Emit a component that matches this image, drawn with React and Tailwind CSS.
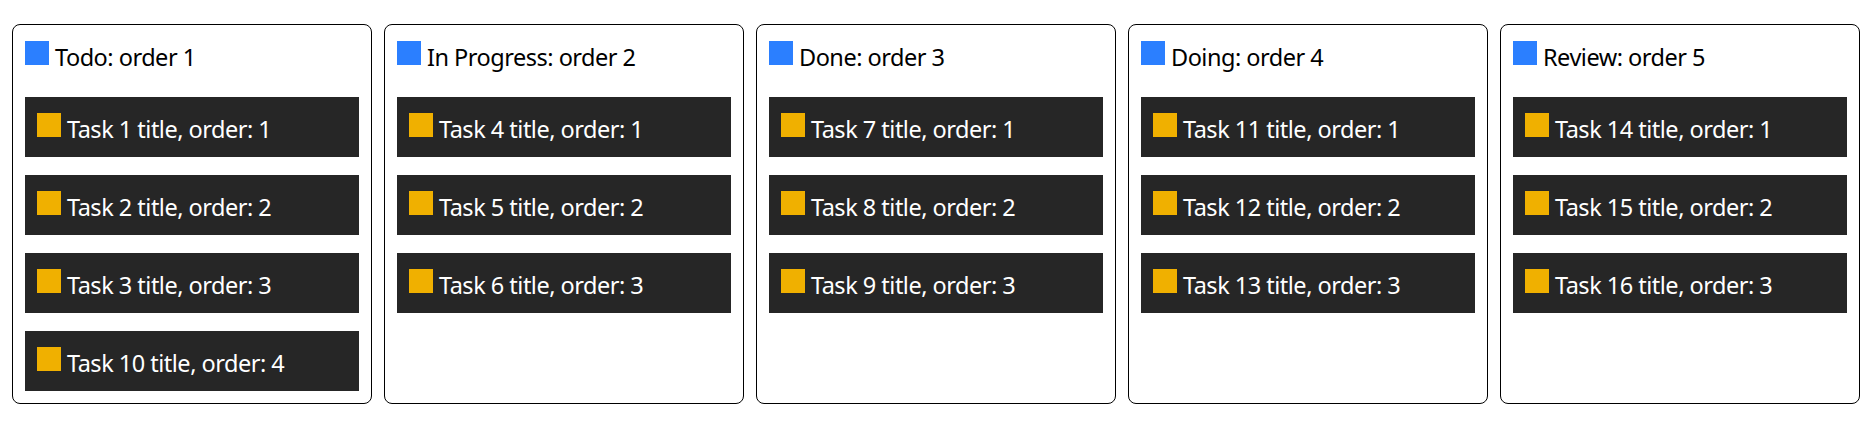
import React from "react";

const columns = [
  { title: "Todo: order 1", tasks: ["Task 1 title, order: 1", "Task 2 title, order: 2", "Task 3 title, order: 3", "Task 10 title, order: 4"] },
  { title: "In Progress: order 2", tasks: ["Task 4 title, order: 1", "Task 5 title, order: 2", "Task 6 title, order: 3"] },
  { title: "Done: order 3", tasks: ["Task 7 title, order: 1", "Task 8 title, order: 2", "Task 9 title, order: 3"] },
  { title: "Doing: order 4", tasks: ["Task 11 title, order: 1", "Task 12 title, order: 2", "Task 13 title, order: 3"] },
  { title: "Review: order 5", tasks: ["Task 14 title, order: 1", "Task 15 title, order: 2", "Task 16 title, order: 3"] },
];

export default function App() {
  return (
    <div
      className="flex items-stretch gap-3 pl-3 pt-6 bg-white min-h-[430px]"
      style={{ fontFamily: '"Noto Sans", "Open Sans", sans-serif' }}
    >
      <div className="flex gap-3 items-stretch self-start">
        {columns.map((col) => (
          <div key={col.title} className="w-[360px] border border-black rounded-lg px-3 pt-4 pb-3 flex flex-col">
            <div className="flex items-start gap-1.5 h-7 text-[23.5px] leading-7 tracking-[-0.5px] text-black">
              <span className="w-6 h-6 bg-[#2b7fff] shrink-0"></span>
              <span className="mt-[2px]">{col.title}</span>
            </div>
            <div className="flex flex-col gap-[18px] mt-7">
              {col.tasks.map((t) => (
                <div key={t} className="bg-[#262626] h-[60px] px-3 pt-4 flex items-start gap-1.5 text-[23.5px] leading-7 tracking-[-0.5px] text-white">
                  <span className="w-6 h-6 bg-[#f0b000] shrink-0"></span>
                  <span className="mt-[2px]">{t}</span>
                </div>
              ))}
            </div>
          </div>
        ))}
      </div>
    </div>
  );
}
